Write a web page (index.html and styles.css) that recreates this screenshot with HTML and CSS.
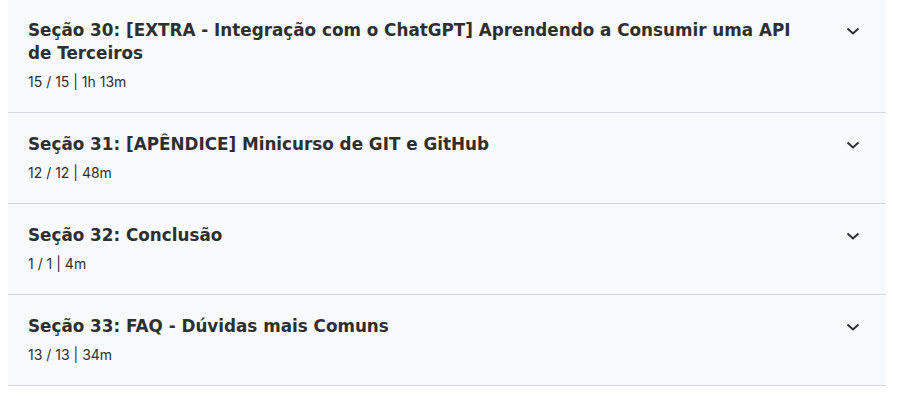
FILE: index.html
```html
<!DOCTYPE html>
<html lang="pt-BR">
<head>
<meta charset="utf-8">
<link rel="stylesheet" href="styles.css">
</head>
<body>
<div class="curriculum">
  <div class="section">
    <div class="section-text">
      <h3 class="section-title">Seção 30: [EXTRA - Integração com o ChatGPT] Aprendendo a Consumir uma API de Terceiros</h3>
      <div class="section-meta">15 / 15 | 1h 13m</div>
    </div>
    <svg class="chevron" width="16" height="16" viewBox="0 0 16 16"><path d="M2.5 5.5 8 10.5l5.5-5" fill="none" stroke="#2d2f31" stroke-width="2"/></svg>
  </div>
  <div class="section">
    <div class="section-text">
      <h3 class="section-title">Seção 31: [APÊNDICE] Minicurso de GIT e GitHub</h3>
      <div class="section-meta">12 / 12 | 48m</div>
    </div>
    <svg class="chevron" width="16" height="16" viewBox="0 0 16 16"><path d="M2.5 5.5 8 10.5l5.5-5" fill="none" stroke="#2d2f31" stroke-width="2"/></svg>
  </div>
  <div class="section">
    <div class="section-text">
      <h3 class="section-title">Seção 32: Conclusão</h3>
      <div class="section-meta">1 / 1 | 4m</div>
    </div>
    <svg class="chevron" width="16" height="16" viewBox="0 0 16 16"><path d="M2.5 5.5 8 10.5l5.5-5" fill="none" stroke="#2d2f31" stroke-width="2"/></svg>
  </div>
  <div class="section">
    <div class="section-text">
      <h3 class="section-title">Seção 33: FAQ - Dúvidas mais Comuns</h3>
      <div class="section-meta">13 / 13 | 34m</div>
    </div>
    <svg class="chevron" width="16" height="16" viewBox="0 0 16 16"><path d="M2.5 5.5 8 10.5l5.5-5" fill="none" stroke="#2d2f31" stroke-width="2"/></svg>
  </div>
</div>
</body>
</html>
```

FILE: styles.css
```css
html, body {
  margin: 0;
  background: #ffffff;
}
body {
  padding: 0 18px 0 8px;
  font-family: Inter, "Noto Sans", sans-serif;
  color: #2d2f31;
}
.curriculum {
  margin-top: -1px;
  background: #f7f9fa;
}
.section {
  display: flex;
  align-items: flex-start;
  padding: 20px 25px 20px 20px;
  border-bottom: 1px solid #d1d7dc;
}
.section-text {
  flex: 1;
  min-width: 0;
  padding-right: 40px;
}
.section-title {
  margin: 0;
  font-family: "DejaVu Sans", sans-serif;
  font-size: 16.8px;
  line-height: 23px;
  padding-bottom: 1px;
  font-weight: 700;
}
.section-meta {
  margin-top: 6px;
  font-size: 14px;
  line-height: 20px;
  font-weight: 400;
}
.chevron {
  flex: none;
  margin-top: 4px;
}
```
